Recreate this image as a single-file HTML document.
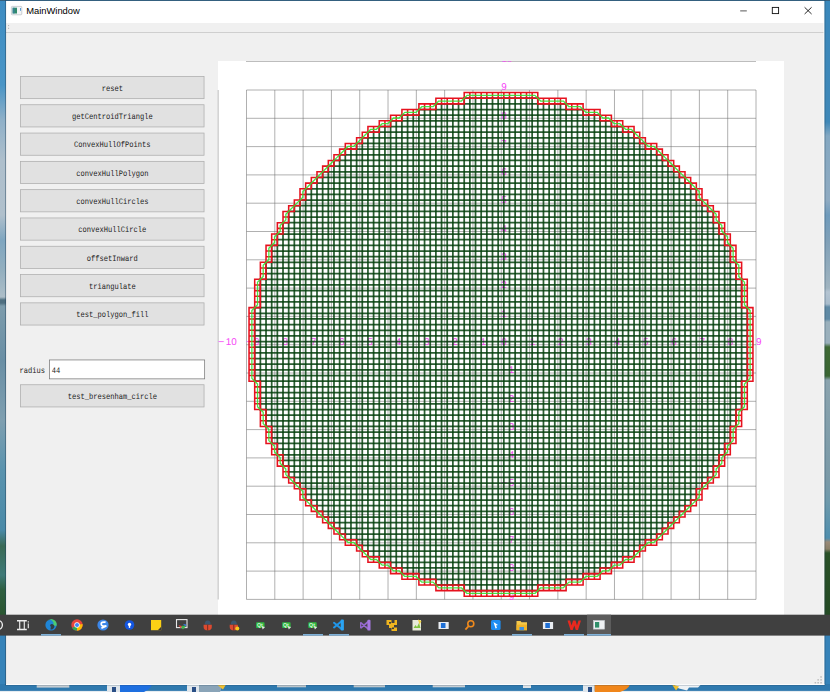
<!DOCTYPE html>
<html lang="en"><head><meta charset="utf-8"><title>MainWindow</title>
<style>
html,body{margin:0;padding:0}
body{width:830px;height:692px;overflow:hidden;position:relative;background:#3b86b9;font-family:"Liberation Sans",sans-serif}
.abs{position:absolute}
#wl{left:0;top:0;width:7px;height:616px;background:linear-gradient(180deg,#3d8cc2 0.00%,#4a95c6 13.80%,#8fb0c8 19.48%,#aebfcc 25.97%,#b0c0cc 34.90%,#7fa6c0 38.96%,#93afbf 43.83%,#adbec8 48.21%,#4f6f80 48.70%,#4f6f80 49.19%,#7d9cac 49.68%,#6a8fa5 58.44%,#7f9fb0 68.18%,#5a93ae 76.30%,#4a8aa8 86.04%,#3a6a55 88.64%,#3f7a78 93.34%,#2f5f40 95.80%,#2a5530 100.00%)}
#wr{left:823px;top:0;width:7px;height:616px;background:linear-gradient(180deg,#3a88bc 0.00%,#3f88b8 19.81%,#84a8c2 22.08%,#8fabc2 32.47%,#6f9bbc 34.90%,#7fa0b8 38.96%,#a0b4c0 46.75%,#b4c4d2 47.40%,#a8bccc 49.35%,#5f8aa5 49.84%,#5f8aa5 51.79%,#9ab0bc 52.27%,#9ab0bc 55.68%,#3f6a35 56.33%,#3a6632 61.04%,#8aa3ae 61.69%,#7a9aa8 77.92%,#6f9aac 81.17%,#4f8fae 87.34%,#9a8a78 87.99%,#8a8068 89.12%,#2a5228 89.77%,#244a24 100.00%)}
#wb{left:0;top:616px;width:830px;height:76px;background:#3683b9}
#wt{left:0;top:0;width:830px;height:1px;background:#34607f}
#win{left:6px;top:1px;width:818px;height:683.5px;background:#f0f0f0}
#title{left:6px;top:1px;width:818px;height:22px;background:#fff}
#ttxt{left:26.3px;top:4.9px;font-size:9.4px;line-height:11px;color:#000;letter-spacing:-0.02px}
#tool{left:6px;top:23px;width:818px;height:9px;background:#f0f0f0;border-bottom:1px solid #cfcfcf}
#white{left:218px;top:61px;width:566px;height:556px;background:#fff}
svg.plot{position:absolute;left:0;top:0}
svg.tb{position:absolute;left:0;top:614px}
svg.chrome{position:absolute;left:0;top:0}
</style></head><body>
<div class="abs" id="wb"></div><div class="abs" id="wl"></div><div class="abs" id="wr"></div><div class="abs" id="wt"></div>
<svg class="abs" style="left:0;top:684px" width="830" height="8" viewBox="0 684 830 8"><rect x="0" y="684" width="830" height="8" fill="#2f79ae"/><rect x="0" y="690.900" width="830" height="1.100" fill="#e6ecf1"/><rect x="36.700" y="685" width="32.600" height="2.600" fill="#c4ccd2"/><rect x="107" y="685" width="13" height="7" fill="#dfe6ec"/><rect x="112" y="687" width="4" height="5" fill="#2a4f86"/><path d="M120 684.500h32q-2 5-8 7.500h-24z" fill="#1e6fe0"/><rect x="187" y="685" width="12" height="7" fill="#dfe6ec"/><rect x="192" y="687" width="4" height="5" fill="#2a4f86"/><path d="M199 684.500h24l-3 7.500h-21z" fill="#8aa4b8"/><path d="M217 684.500h9l-3 5z" fill="#f0c030"/><rect x="277" y="685" width="29" height="2.300" fill="#bcc6cc"/><rect x="353.700" y="685" width="31.300" height="2.300" fill="#bcc6cc"/><rect x="432.700" y="685" width="32.300" height="2.300" fill="#c8d0d6"/><rect x="523" y="685" width="8" height="3" fill="#dfe4e8"/><rect x="583" y="685" width="11.700" height="7" fill="#dfe6ec"/><rect x="588" y="687" width="4" height="5" fill="#2a4f86"/><path d="M594.700 684.500h35.300q-2 5-10 7.500h-25.300z" fill="#f0861a"/><path d="M673 684.500h28l-3 3h-9l-2 3l-8-2z" fill="#eef2f5"/><path d="M672 684.500l4 6l3-4z" fill="#f0c030"/></svg>
<div class="abs" id="win"></div><div class="abs" id="title"></div><div class="abs" id="ttxt">MainWindow</div><div class="abs" id="tool"></div>
<div class="abs" id="white"></div>
<svg class="chrome" width="830" height="692" viewBox="0 0 830 692">
<g fill="#e1e1e1" stroke="#adadad" stroke-width="0.75">
<rect x="20.45" y="76.45" width="183.6" height="22.2"/>
<rect x="20.45" y="104.75" width="183.6" height="22.2"/>
<rect x="20.45" y="133.05" width="183.6" height="22.2"/>
<rect x="20.45" y="161.35" width="183.6" height="22.2"/>
<rect x="20.45" y="189.65" width="183.6" height="22.2"/>
<rect x="20.45" y="217.95" width="183.6" height="22.2"/>
<rect x="20.45" y="246.25" width="183.6" height="22.2"/>
<rect x="20.45" y="274.55" width="183.6" height="22.2"/>
<rect x="20.45" y="302.85" width="183.6" height="22.2"/>
<rect x="20.45" y="384.75" width="183.6" height="22.2"/>
</g>
<rect x="49.55" y="359.95" width="155.1" height="18.9" fill="#fff" stroke="#7a7a7a" stroke-width="0.75"/>
<g font-family="'Liberation Mono', monospace" font-size="8.3" text-rendering="geometricPrecision" fill="#1c1c1c">
<text transform="translate(112.3 90.8) scale(0.8534 1)" text-anchor="middle">reset</text>
<text transform="translate(112.3 119.1) scale(0.8534 1)" text-anchor="middle">getCentroidTriangle</text>
<text transform="translate(112.3 147.4) scale(0.8534 1)" text-anchor="middle">ConvexHullOfPoints</text>
<text transform="translate(112.3 175.7) scale(0.8534 1)" text-anchor="middle">convexHullPolygon</text>
<text transform="translate(112.3 204) scale(0.8534 1)" text-anchor="middle">convexHullCircles</text>
<text transform="translate(112.3 232.3) scale(0.8534 1)" text-anchor="middle">convexHullCircle</text>
<text transform="translate(112.3 260.6) scale(0.8534 1)" text-anchor="middle">offsetInward</text>
<text transform="translate(112.3 288.9) scale(0.8534 1)" text-anchor="middle">triangulate</text>
<text transform="translate(112.3 317.2) scale(0.8534 1)" text-anchor="middle">test_polygon_fill</text>
<text transform="translate(112.3 399.1) scale(0.8534 1)" text-anchor="middle">test_bresenham_circle</text>
<text transform="translate(19.5 373.3) scale(0.8534 1)" text-anchor="start">radius</text>
<text transform="translate(51.7 373) scale(0.8534 1)" text-anchor="start">44</text>
</g>
</svg>
<svg class="chrome" width="830" height="692" viewBox="0 0 830 692">
<path d="M5.600 0V685M824.900 0V685" stroke="#1d3c55" stroke-opacity="0.450" stroke-width="1"/><path d="M5 685H825" stroke="#1d3c55" stroke-opacity="0.400" stroke-width="1"/>
<rect x="11.400" y="6.400" width="10.400" height="8.400" rx="0.800" fill="#f3f5f6" stroke="#b9bfc6" stroke-width="0.700"/>
<rect x="12.600" y="7.700" width="4.400" height="5.800" fill="#2f8a6a"/><rect x="12.600" y="7.700" width="2" height="5.800" fill="#3a7fae" opacity="0.6"/>
<rect x="20" y="8" width="1" height="2.800" fill="#5aa0d8"/>
<path d="M740.200 10.900h6.600" stroke="#444" stroke-width="0.900"/>
<rect x="772.300" y="7.400" width="6.300" height="6.200" fill="none" stroke="#111" stroke-width="0.900"/>
<path d="M804.600 7.300l7 6.700M811.600 7.300l-7 6.700" stroke="#111" stroke-width="0.900"/>
<rect x="8.200" y="25.200" width="0.900" height="0.900" fill="#9a9a9a"/><rect x="8.200" y="27.800" width="0.900" height="0.900" fill="#9a9a9a"/>
<path d="M246 61.500H756" stroke="#bdbdbd" stroke-width="1.100"/>
<path d="M218.200 90V599.500" stroke="#d2d2d2" stroke-width="1.500"/>
<rect x="820.3" y="676.2" width="1.500" height="1.500" fill="#bcbcbc"/>
<rect x="817.4" y="679.1" width="1.500" height="1.500" fill="#bcbcbc"/>
<rect x="820.3" y="679.1" width="1.500" height="1.500" fill="#bcbcbc"/>
<rect x="814.6" y="682" width="1.500" height="1.500" fill="#bcbcbc"/>
<rect x="817.4" y="682" width="1.500" height="1.500" fill="#bcbcbc"/>
<rect x="820.3" y="682" width="1.500" height="1.500" fill="#bcbcbc"/>
<path d="M823.950 1V685" stroke="#fcfcfc" stroke-width="0.900"/><path d="M6 684.450H824.400" stroke="#fcfcfc" stroke-width="1.100"/>
</svg>
<svg class="plot" width="830" height="692" viewBox="0 0 830 692">
<path d="M246.5 90V599.4M246.5 90H756M274.81 90V599.4M246.5 118.3H756M303.11 90V599.4M246.5 146.6H756M331.42 90V599.4M246.5 174.9H756M359.72 90V599.4M246.5 203.2H756M388.03 90V599.4M246.5 231.5H756M416.33 90V599.4M246.5 259.8H756M444.64 90V599.4M246.5 288.1H756M472.94 90V599.4M246.5 316.4H756M501.25 90V599.4M246.5 344.7H756M529.56 90V599.4M246.5 373H756M557.86 90V599.4M246.5 401.3H756M586.17 90V599.4M246.5 429.6H756M614.47 90V599.4M246.5 457.9H756M642.78 90V599.4M246.5 486.2H756M671.08 90V599.4M246.5 514.5H756M699.39 90V599.4M246.5 542.8H756M727.69 90V599.4M246.5 571.1H756M756 90V599.4M246.5 599.4H756" stroke="#6e6e6e" stroke-width="0.55" fill="none"/>
<g font-family="'Liberation Sans', sans-serif" font-size="9.9" text-rendering="geometricPrecision" fill="#f646f6">
<text transform="translate(217.89 345.1) scale(1.1 1)">−</text><text x="225.79" y="345.1">10</text>
<text transform="translate(246.2 345.1) scale(1.1 1)">−</text><text x="254.1" y="345.1">9</text>
<text transform="translate(274.51 345.1) scale(1.1 1)">−</text><text x="282.41" y="345.1">8</text>
<text transform="translate(302.81 345.1) scale(1.1 1)">−</text><text x="310.71" y="345.1">7</text>
<text transform="translate(331.12 345.1) scale(1.1 1)">−</text><text x="339.02" y="345.1">6</text>
<text transform="translate(359.42 345.1) scale(1.1 1)">−</text><text x="367.32" y="345.1">5</text>
<text transform="translate(387.73 345.1) scale(1.1 1)">−</text><text x="395.63" y="345.1">4</text>
<text transform="translate(416.03 345.1) scale(1.1 1)">−</text><text x="423.93" y="345.1">3</text>
<text transform="translate(444.34 345.1) scale(1.1 1)">−</text><text x="452.24" y="345.1">2</text>
<text transform="translate(472.64 345.1) scale(1.1 1)">−</text><text x="480.54" y="345.1">1</text>
<text x="529.66" y="345.1">1</text>
<text x="557.96" y="345.1">2</text>
<text x="586.27" y="345.1">3</text>
<text x="614.57" y="345.1">4</text>
<text x="642.88" y="345.1">5</text>
<text x="671.18" y="345.1">6</text>
<text x="699.49" y="345.1">7</text>
<text x="727.79" y="345.1">8</text>
<text x="756.1" y="345.1">9</text>
<text transform="translate(500.95 599.6) scale(1.1 1)">−</text><text x="508.85" y="599.6">9</text>
<text transform="translate(500.95 571.3) scale(1.1 1)">−</text><text x="508.85" y="571.3">8</text>
<text transform="translate(500.95 543) scale(1.1 1)">−</text><text x="508.85" y="543">7</text>
<text transform="translate(500.95 514.7) scale(1.1 1)">−</text><text x="508.85" y="514.7">6</text>
<text transform="translate(500.95 486.4) scale(1.1 1)">−</text><text x="508.85" y="486.4">5</text>
<text transform="translate(500.95 458.1) scale(1.1 1)">−</text><text x="508.85" y="458.1">4</text>
<text transform="translate(500.95 429.8) scale(1.1 1)">−</text><text x="508.85" y="429.8">3</text>
<text transform="translate(500.95 401.5) scale(1.1 1)">−</text><text x="508.85" y="401.5">2</text>
<text transform="translate(500.95 373.2) scale(1.1 1)">−</text><text x="508.85" y="373.2">1</text>
<text x="501.35" y="344.9">0</text>
<text x="501.35" y="316.6">1</text>
<text x="501.35" y="288.3">2</text>
<text x="501.35" y="260">3</text>
<text x="501.35" y="231.7">4</text>
<text x="501.35" y="203.4">5</text>
<text x="501.35" y="175.1">6</text>
<text x="501.35" y="146.8">7</text>
<text x="501.35" y="118.5">8</text>
<text x="501.35" y="90.2">9</text>
</g>
<svg x="246" y="61.3" width="510" height="8" overflow="hidden"><text x="255.55" y="0.5" font-family="'Liberation Sans', sans-serif" font-size="9.9" text-rendering="geometricPrecision" fill="#f646f6">10</text></svg>
<path d="M464.2 590.62H537.8M435.89 584.96H566.11M418.9 579.3H583.1M401.92 573.64H600.09M390.59 567.98H611.41M379.27 562.32H622.73M367.94 556.66H634.06M362.28 551H639.72M356.62 545.34H645.38M345.3 539.68H656.7M339.63 534.02H662.37M333.97 528.36H668.03M328.31 522.7H673.69M322.65 517.04H679.35M316.99 511.38H685.01M311.32 505.72H690.68M305.66 500.06H696.34M305.66 494.4H696.34M300 488.74H702M294.34 483.08H707.66M288.68 477.42H713.33M288.68 471.76H713.33M283.01 466.1H718.99M283.01 460.44H718.99M277.35 454.78H724.65M277.35 449.12H724.65M271.69 443.46H730.31M271.69 437.8H730.31M271.69 432.14H730.31M266.03 426.48H735.97M266.03 420.82H735.97M266.03 415.16H735.97M260.37 409.5H741.63M260.37 403.84H741.63M260.37 398.18H741.63M260.37 392.52H741.63M260.37 386.86H741.63M254.7 381.2H747.3M254.7 375.54H747.3M254.7 369.88H747.3M254.7 364.22H747.3M254.7 358.56H747.3M254.7 352.9H747.3M254.7 347.24H747.3M254.7 341.58H747.3M254.7 335.92H747.3M254.7 330.26H747.3M254.7 324.6H747.3M254.7 318.94H747.3M254.7 313.28H747.3M254.7 307.62H747.3M260.37 301.96H741.63M260.37 296.3H741.63M260.37 290.64H741.63M260.37 284.98H741.63M260.37 279.32H741.63M266.03 273.66H735.97M266.03 268H735.97M266.03 262.34H735.97M271.69 256.68H730.31M271.69 251.02H730.31M271.69 245.36H730.31M277.35 239.7H724.65M277.35 234.04H724.65M283.01 228.38H718.99M283.01 222.72H718.99M288.68 217.06H713.33M288.68 211.4H713.33M294.34 205.74H707.66M300 200.08H702M305.66 194.42H696.34M305.66 188.76H696.34M311.32 183.1H690.68M316.99 177.44H685.01M322.65 171.78H679.35M328.31 166.12H673.69M333.97 160.46H668.03M339.63 154.8H662.37M345.3 149.14H656.7M356.62 143.48H645.38M362.28 137.82H639.72M367.94 132.16H634.06M379.27 126.5H622.73M390.59 120.84H611.41M401.92 115.18H600.09M418.9 109.52H583.1M435.89 103.86H566.11M464.2 98.2H537.8" stroke="#033f0c" stroke-width="1.75" stroke-linecap="square" fill="none" opacity="0.84"/>
<path d="M254.7 307.62V381.2M260.37 279.32V409.5M266.03 262.34V426.48M271.69 245.36V443.46M277.35 234.04V454.78M283.01 222.72V466.1M288.68 211.4V477.42M294.34 205.74V483.08M300 200.08V488.74M305.66 188.76V500.06M311.32 183.1V505.72M316.99 177.44V511.38M322.65 171.78V517.04M328.31 166.12V522.7M333.97 160.46V528.36M339.63 154.8V534.02M345.3 149.14V539.68M350.96 149.14V539.68M356.62 143.48V545.34M362.28 137.82V551M367.94 132.16V556.66M373.61 132.16V556.66M379.27 126.5V562.32M384.93 126.5V562.32M390.59 120.84V567.98M396.25 120.84V567.98M401.92 115.18V573.64M407.58 115.18V573.64M413.24 115.18V573.64M418.9 109.52V579.3M424.56 109.52V579.3M430.23 109.52V579.3M435.89 103.86V584.96M441.55 103.86V584.96M447.21 103.86V584.96M452.87 103.86V584.96M458.54 103.86V584.96M464.2 98.2V590.62M469.86 98.2V590.62M475.52 98.2V590.62M481.18 98.2V590.62M486.85 98.2V590.62M492.51 98.2V590.62M498.17 98.2V590.62M503.83 98.2V590.62M509.49 98.2V590.62M515.15 98.2V590.62M520.82 98.2V590.62M526.48 98.2V590.62M532.14 98.2V590.62M537.8 98.2V590.62M543.47 103.86V584.96M549.13 103.86V584.96M554.79 103.86V584.96M560.45 103.86V584.96M566.11 103.86V584.96M571.77 109.52V579.3M577.44 109.52V579.3M583.1 109.52V579.3M588.76 115.18V573.64M594.42 115.18V573.64M600.09 115.18V573.64M605.75 120.84V567.98M611.41 120.84V567.98M617.07 126.5V562.32M622.73 126.5V562.32M628.39 132.16V556.66M634.06 132.16V556.66M639.72 137.82V551M645.38 143.48V545.34M651.04 149.14V539.68M656.7 149.14V539.68M662.37 154.8V534.02M668.03 160.46V528.36M673.69 166.12V522.7M679.35 171.78V517.04M685.01 177.44V511.38M690.68 183.1V505.72M696.34 188.76V500.06M702 200.08V488.74M707.66 205.74V483.08M713.33 211.4V477.42M718.99 222.72V466.1M724.65 234.04V454.78M730.31 245.36V443.46M735.97 262.34V426.48M741.63 279.32V409.5M747.3 307.62V381.2" stroke="#033f0c" stroke-width="1.75" stroke-linecap="square" fill="none" opacity="0.84"/>
<path d="M249.04 347.24h5.66v5.66h-5.66zM249.04 352.9h5.66v5.66h-5.66zM249.04 358.56h5.66v5.66h-5.66zM249.04 364.22h5.66v5.66h-5.66zM249.04 369.88h5.66v5.66h-5.66zM249.04 375.54h5.66v5.66h-5.66zM254.7 381.2h5.66v5.66h-5.66zM254.7 386.86h5.66v5.66h-5.66zM254.7 392.52h5.66v5.66h-5.66zM254.7 398.18h5.66v5.66h-5.66zM254.7 403.84h5.66v5.66h-5.66zM260.37 409.5h5.66v5.66h-5.66zM260.37 415.16h5.66v5.66h-5.66zM260.37 420.82h5.66v5.66h-5.66zM266.03 426.48h5.66v5.66h-5.66zM266.03 432.14h5.66v5.66h-5.66zM266.03 437.8h5.66v5.66h-5.66zM271.69 443.46h5.66v5.66h-5.66zM271.69 449.12h5.66v5.66h-5.66zM277.35 454.78h5.66v5.66h-5.66zM277.35 460.44h5.66v5.66h-5.66zM283.01 466.1h5.66v5.66h-5.66zM283.01 471.76h5.66v5.66h-5.66zM288.68 477.42h5.66v5.66h-5.66zM294.34 483.08h5.66v5.66h-5.66zM300 488.74h5.66v5.66h-5.66zM300 494.4h5.66v5.66h-5.66zM305.66 500.06h5.66v5.66h-5.66zM311.32 505.72h5.66v5.66h-5.66zM316.99 511.38h5.66v5.66h-5.66zM322.65 517.04h5.66v5.66h-5.66zM328.31 522.7h5.66v5.66h-5.66zM333.97 528.36h5.66v5.66h-5.66zM339.63 534.02h5.66v5.66h-5.66zM345.3 539.68h5.66v5.66h-5.66zM350.96 539.68h5.66v5.66h-5.66zM356.62 545.34h5.66v5.66h-5.66zM362.28 551h5.66v5.66h-5.66zM367.94 556.66h5.66v5.66h-5.66zM373.61 556.66h5.66v5.66h-5.66zM379.27 562.32h5.66v5.66h-5.66zM384.93 562.32h5.66v5.66h-5.66zM390.59 567.98h5.66v5.66h-5.66zM396.25 567.98h5.66v5.66h-5.66zM401.92 573.64h5.66v5.66h-5.66zM407.58 573.64h5.66v5.66h-5.66zM413.24 573.64h5.66v5.66h-5.66zM418.9 579.3h5.66v5.66h-5.66zM424.56 579.3h5.66v5.66h-5.66zM430.23 579.3h5.66v5.66h-5.66zM435.89 584.96h5.66v5.66h-5.66zM441.55 584.96h5.66v5.66h-5.66zM447.21 584.96h5.66v5.66h-5.66zM452.87 584.96h5.66v5.66h-5.66zM458.54 584.96h5.66v5.66h-5.66zM464.2 590.62h5.66v5.66h-5.66zM469.86 590.62h5.66v5.66h-5.66zM475.52 590.62h5.66v5.66h-5.66zM481.18 590.62h5.66v5.66h-5.66zM486.85 590.62h5.66v5.66h-5.66zM492.51 590.62h5.66v5.66h-5.66zM498.17 590.62h5.66v5.66h-5.66zM503.83 590.62h5.66v5.66h-5.66zM509.49 590.62h5.66v5.66h-5.66zM515.15 590.62h5.66v5.66h-5.66zM520.82 590.62h5.66v5.66h-5.66zM526.48 590.62h5.66v5.66h-5.66zM532.14 590.62h5.66v5.66h-5.66zM537.8 584.96h5.66v5.66h-5.66zM543.47 584.96h5.66v5.66h-5.66zM549.13 584.96h5.66v5.66h-5.66zM554.79 584.96h5.66v5.66h-5.66zM560.45 584.96h5.66v5.66h-5.66zM566.11 579.3h5.66v5.66h-5.66zM571.77 579.3h5.66v5.66h-5.66zM577.44 579.3h5.66v5.66h-5.66zM583.1 573.64h5.66v5.66h-5.66zM588.76 573.64h5.66v5.66h-5.66zM594.42 573.64h5.66v5.66h-5.66zM600.09 567.98h5.66v5.66h-5.66zM605.75 567.98h5.66v5.66h-5.66zM611.41 562.32h5.66v5.66h-5.66zM617.07 562.32h5.66v5.66h-5.66zM622.73 556.66h5.66v5.66h-5.66zM628.39 556.66h5.66v5.66h-5.66zM634.06 551h5.66v5.66h-5.66zM639.72 545.34h5.66v5.66h-5.66zM645.38 539.68h5.66v5.66h-5.66zM651.04 539.68h5.66v5.66h-5.66zM656.7 534.02h5.66v5.66h-5.66zM662.37 528.36h5.66v5.66h-5.66zM668.03 522.7h5.66v5.66h-5.66zM673.69 517.04h5.66v5.66h-5.66zM679.35 511.38h5.66v5.66h-5.66zM685.01 505.72h5.66v5.66h-5.66zM690.68 500.06h5.66v5.66h-5.66zM696.34 494.4h5.66v5.66h-5.66zM696.34 488.74h5.66v5.66h-5.66zM702 483.08h5.66v5.66h-5.66zM707.66 477.42h5.66v5.66h-5.66zM713.33 471.76h5.66v5.66h-5.66zM713.33 466.1h5.66v5.66h-5.66zM718.99 460.44h5.66v5.66h-5.66zM718.99 454.78h5.66v5.66h-5.66zM724.65 449.12h5.66v5.66h-5.66zM724.65 443.46h5.66v5.66h-5.66zM730.31 437.8h5.66v5.66h-5.66zM730.31 432.14h5.66v5.66h-5.66zM730.31 426.48h5.66v5.66h-5.66zM735.97 420.82h5.66v5.66h-5.66zM735.97 415.16h5.66v5.66h-5.66zM735.97 409.5h5.66v5.66h-5.66zM741.63 403.84h5.66v5.66h-5.66zM741.63 398.18h5.66v5.66h-5.66zM741.63 392.52h5.66v5.66h-5.66zM741.63 386.86h5.66v5.66h-5.66zM741.63 381.2h5.66v5.66h-5.66zM747.3 375.54h5.66v5.66h-5.66zM747.3 369.88h5.66v5.66h-5.66zM747.3 364.22h5.66v5.66h-5.66zM747.3 358.56h5.66v5.66h-5.66zM747.3 352.9h5.66v5.66h-5.66zM747.3 347.24h5.66v5.66h-5.66zM747.3 341.58h5.66v5.66h-5.66zM747.3 335.92h5.66v5.66h-5.66zM747.3 330.26h5.66v5.66h-5.66zM747.3 324.6h5.66v5.66h-5.66zM747.3 318.94h5.66v5.66h-5.66zM747.3 313.28h5.66v5.66h-5.66zM747.3 307.62h5.66v5.66h-5.66zM741.63 301.96h5.66v5.66h-5.66zM741.63 296.3h5.66v5.66h-5.66zM741.63 290.64h5.66v5.66h-5.66zM741.63 284.98h5.66v5.66h-5.66zM741.63 279.32h5.66v5.66h-5.66zM735.97 273.66h5.66v5.66h-5.66zM735.97 268h5.66v5.66h-5.66zM735.97 262.34h5.66v5.66h-5.66zM730.31 256.68h5.66v5.66h-5.66zM730.31 251.02h5.66v5.66h-5.66zM730.31 245.36h5.66v5.66h-5.66zM724.65 239.7h5.66v5.66h-5.66zM724.65 234.04h5.66v5.66h-5.66zM718.99 228.38h5.66v5.66h-5.66zM718.99 222.72h5.66v5.66h-5.66zM713.33 217.06h5.66v5.66h-5.66zM713.33 211.4h5.66v5.66h-5.66zM707.66 205.74h5.66v5.66h-5.66zM702 200.08h5.66v5.66h-5.66zM696.34 194.42h5.66v5.66h-5.66zM696.34 188.76h5.66v5.66h-5.66zM690.68 183.1h5.66v5.66h-5.66zM685.01 177.44h5.66v5.66h-5.66zM679.35 171.78h5.66v5.66h-5.66zM673.69 166.12h5.66v5.66h-5.66zM668.03 160.46h5.66v5.66h-5.66zM662.37 154.8h5.66v5.66h-5.66zM656.7 149.14h5.66v5.66h-5.66zM651.04 143.48h5.66v5.66h-5.66zM645.38 143.48h5.66v5.66h-5.66zM639.72 137.82h5.66v5.66h-5.66zM634.06 132.16h5.66v5.66h-5.66zM628.39 126.5h5.66v5.66h-5.66zM622.73 126.5h5.66v5.66h-5.66zM617.07 120.84h5.66v5.66h-5.66zM611.41 120.84h5.66v5.66h-5.66zM605.75 115.18h5.66v5.66h-5.66zM600.09 115.18h5.66v5.66h-5.66zM594.42 109.52h5.66v5.66h-5.66zM588.76 109.52h5.66v5.66h-5.66zM583.1 109.52h5.66v5.66h-5.66zM577.44 103.86h5.66v5.66h-5.66zM571.77 103.86h5.66v5.66h-5.66zM566.11 103.86h5.66v5.66h-5.66zM560.45 98.2h5.66v5.66h-5.66zM554.79 98.2h5.66v5.66h-5.66zM549.13 98.2h5.66v5.66h-5.66zM543.47 98.2h5.66v5.66h-5.66zM537.8 98.2h5.66v5.66h-5.66zM532.14 92.54h5.66v5.66h-5.66zM526.48 92.54h5.66v5.66h-5.66zM520.82 92.54h5.66v5.66h-5.66zM515.15 92.54h5.66v5.66h-5.66zM509.49 92.54h5.66v5.66h-5.66zM503.83 92.54h5.66v5.66h-5.66zM498.17 92.54h5.66v5.66h-5.66zM492.51 92.54h5.66v5.66h-5.66zM486.85 92.54h5.66v5.66h-5.66zM481.18 92.54h5.66v5.66h-5.66zM475.52 92.54h5.66v5.66h-5.66zM469.86 92.54h5.66v5.66h-5.66zM464.2 92.54h5.66v5.66h-5.66zM458.54 98.2h5.66v5.66h-5.66zM452.87 98.2h5.66v5.66h-5.66zM447.21 98.2h5.66v5.66h-5.66zM441.55 98.2h5.66v5.66h-5.66zM435.89 98.2h5.66v5.66h-5.66zM430.23 103.86h5.66v5.66h-5.66zM424.56 103.86h5.66v5.66h-5.66zM418.9 103.86h5.66v5.66h-5.66zM413.24 109.52h5.66v5.66h-5.66zM407.58 109.52h5.66v5.66h-5.66zM401.92 109.52h5.66v5.66h-5.66zM396.25 115.18h5.66v5.66h-5.66zM390.59 115.18h5.66v5.66h-5.66zM384.93 120.84h5.66v5.66h-5.66zM379.27 120.84h5.66v5.66h-5.66zM373.61 126.5h5.66v5.66h-5.66zM367.94 126.5h5.66v5.66h-5.66zM362.28 132.16h5.66v5.66h-5.66zM356.62 137.82h5.66v5.66h-5.66zM350.96 143.48h5.66v5.66h-5.66zM345.3 143.48h5.66v5.66h-5.66zM339.63 149.14h5.66v5.66h-5.66zM333.97 154.8h5.66v5.66h-5.66zM328.31 160.46h5.66v5.66h-5.66zM322.65 166.12h5.66v5.66h-5.66zM316.99 171.78h5.66v5.66h-5.66zM311.32 177.44h5.66v5.66h-5.66zM305.66 183.1h5.66v5.66h-5.66zM300 188.76h5.66v5.66h-5.66zM300 194.42h5.66v5.66h-5.66zM294.34 200.08h5.66v5.66h-5.66zM288.68 205.74h5.66v5.66h-5.66zM283.01 211.4h5.66v5.66h-5.66zM283.01 217.06h5.66v5.66h-5.66zM277.35 222.72h5.66v5.66h-5.66zM277.35 228.38h5.66v5.66h-5.66zM271.69 234.04h5.66v5.66h-5.66zM271.69 239.7h5.66v5.66h-5.66zM266.03 245.36h5.66v5.66h-5.66zM266.03 251.02h5.66v5.66h-5.66zM266.03 256.68h5.66v5.66h-5.66zM260.37 262.34h5.66v5.66h-5.66zM260.37 268h5.66v5.66h-5.66zM260.37 273.66h5.66v5.66h-5.66zM254.7 279.32h5.66v5.66h-5.66zM254.7 284.98h5.66v5.66h-5.66zM254.7 290.64h5.66v5.66h-5.66zM254.7 296.3h5.66v5.66h-5.66zM254.7 301.96h5.66v5.66h-5.66zM249.04 307.62h5.66v5.66h-5.66zM249.04 313.28h5.66v5.66h-5.66zM249.04 318.94h5.66v5.66h-5.66zM249.04 324.6h5.66v5.66h-5.66zM249.04 330.26h5.66v5.66h-5.66zM249.04 335.92h5.66v5.66h-5.66zM249.04 341.58h5.66v5.66h-5.66z" stroke="#e6121e" stroke-width="1.55" fill="none"/>
<polygon points="251.87,350.07 251.87,355.73 251.87,361.39 251.87,367.05 251.87,372.71 251.87,378.37 257.53,384.03 257.53,389.69 257.53,395.35 257.53,401.01 257.53,406.67 263.2,412.33 263.2,417.99 263.2,423.65 268.86,429.31 268.86,434.97 268.86,440.63 274.52,446.29 274.52,451.95 280.18,457.61 280.18,463.27 285.84,468.93 285.84,474.59 291.51,480.25 297.17,485.91 302.83,491.57 302.83,497.23 308.49,502.89 314.15,508.55 319.82,514.21 325.48,519.87 331.14,525.53 336.8,531.19 342.46,536.85 348.13,542.51 353.79,542.51 359.45,548.17 365.11,553.83 370.77,559.49 376.44,559.49 382.1,565.15 387.76,565.15 393.42,570.81 399.08,570.81 404.75,576.47 410.41,576.47 416.07,576.47 421.73,582.13 427.39,582.13 433.06,582.13 438.72,587.79 444.38,587.79 450.04,587.79 455.7,587.79 461.37,587.79 467.03,593.45 472.69,593.45 478.35,593.45 484.01,593.45 489.68,593.45 495.34,593.45 501,593.45 506.66,593.45 512.32,593.45 517.99,593.45 523.65,593.45 529.31,593.45 534.97,593.45 540.63,587.79 546.3,587.79 551.96,587.79 557.62,587.79 563.28,587.79 568.94,582.13 574.61,582.13 580.27,582.13 585.93,576.47 591.59,576.47 597.25,576.47 602.92,570.81 608.58,570.81 614.24,565.15 619.9,565.15 625.56,559.49 631.23,559.49 636.89,553.83 642.55,548.17 648.21,542.51 653.87,542.51 659.54,536.85 665.2,531.19 670.86,525.53 676.52,519.87 682.18,514.21 687.85,508.55 693.51,502.89 699.17,497.23 699.17,491.57 704.83,485.91 710.49,480.25 716.16,474.59 716.16,468.93 721.82,463.27 721.82,457.61 727.48,451.95 727.48,446.29 733.14,440.63 733.14,434.97 733.14,429.31 738.8,423.65 738.8,417.99 738.8,412.33 744.47,406.67 744.47,401.01 744.47,395.35 744.47,389.69 744.47,384.03 750.13,378.37 750.13,372.71 750.13,367.05 750.13,361.39 750.13,355.73 750.13,350.07 750.13,344.41 750.13,338.75 750.13,333.09 750.13,327.43 750.13,321.77 750.13,316.11 750.13,310.45 744.47,304.79 744.47,299.13 744.47,293.47 744.47,287.81 744.47,282.15 738.8,276.49 738.8,270.83 738.8,265.17 733.14,259.51 733.14,253.85 733.14,248.19 727.48,242.53 727.48,236.87 721.82,231.21 721.82,225.55 716.16,219.89 716.16,214.23 710.49,208.57 704.83,202.91 699.17,197.25 699.17,191.59 693.51,185.93 687.85,180.27 682.18,174.61 676.52,168.95 670.86,163.29 665.2,157.63 659.54,151.97 653.87,146.31 648.21,146.31 642.55,140.65 636.89,134.99 631.23,129.33 625.56,129.33 619.9,123.67 614.24,123.67 608.58,118.01 602.92,118.01 597.25,112.35 591.59,112.35 585.93,112.35 580.27,106.69 574.61,106.69 568.94,106.69 563.28,101.03 557.62,101.03 551.96,101.03 546.3,101.03 540.63,101.03 534.97,95.37 529.31,95.37 523.65,95.37 517.99,95.37 512.32,95.37 506.66,95.37 501,95.37 495.34,95.37 489.68,95.37 484.01,95.37 478.35,95.37 472.69,95.37 467.03,95.37 461.37,101.03 455.7,101.03 450.04,101.03 444.38,101.03 438.72,101.03 433.06,106.69 427.39,106.69 421.73,106.69 416.07,112.35 410.41,112.35 404.75,112.35 399.08,118.01 393.42,118.01 387.76,123.67 382.1,123.67 376.44,129.33 370.77,129.33 365.11,134.99 359.45,140.65 353.79,146.31 348.13,146.31 342.46,151.97 336.8,157.63 331.14,163.29 325.48,168.95 319.82,174.61 314.15,180.27 308.49,185.93 302.83,191.59 302.83,197.25 297.17,202.91 291.51,208.57 285.84,214.23 285.84,219.89 280.18,225.55 280.18,231.21 274.52,236.87 274.52,242.53 268.86,248.19 268.86,253.85 268.86,259.51 263.2,265.17 263.2,270.83 263.2,276.49 257.53,282.15 257.53,287.81 257.53,293.47 257.53,299.13 257.53,304.79 251.87,310.45 251.87,316.11 251.87,321.77 251.87,327.43 251.87,333.09 251.87,338.75 251.87,344.41" stroke="#2ee02e" stroke-width="1.3" stroke-linejoin="round" fill="none" opacity="0.88"/>
</svg>
<svg class="tb" width="830" height="22" viewBox="0 614 830 22">
<rect x="0" y="614.700" width="830" height="20.900" fill="#404040"/>
<rect x="587" y="614.700" width="24" height="20.900" fill="#5c5c5c"/>
<rect x="41" y="634.100" width="20" height="1.500" fill="#86bde8"/>
<rect x="303" y="634.100" width="20" height="1.500" fill="#86bde8"/>
<rect x="329" y="634.100" width="20" height="1.500" fill="#86bde8"/>
<rect x="512" y="634.100" width="20" height="1.500" fill="#86bde8"/>
<rect x="564" y="634.100" width="20" height="1.500" fill="#86bde8"/>
<rect x="587" y="634.100" width="24" height="1.500" fill="#86bde8"/>
<circle cx="-2.100" cy="625" r="4.500" fill="none" stroke="#f0f0f0" stroke-width="1.300"/>
<path d="M17 620.800h9.800M17 629.400h9.800" stroke="#ededed" stroke-width="1.500" fill="none"/><path d="M19.700 621v8.400M24.300 621v8.400" stroke="#e4e4e4" stroke-width="1.200" fill="none"/><path d="M28.300 621.200v1.400M28.300 623.600v4.600" stroke="#ededed" stroke-width="1.100" fill="none"/>
<circle cx="51" cy="625" r="5.600" fill="#1f86d8"/><path d="M47 621a5.600 5.600 0 0 1 9.600 4.800h-4.200a2.600 2.600 0 0 0-5.400-4.800z" fill="#4ccb72"/><path d="M50 625.200a2.400 2.400 0 0 1 4.400 1.600a3.200 3.200 0 0 1-4 2.600a3.600 3.600 0 0 0-.4-4.200z" fill="#2f3f4a"/>
<circle cx="77" cy="625" r="5.7" fill="#e8453c"/><path d="M77 625l-4.9 2.9a5.7 5.7 0 0 0 4.9 2.8z" fill="#34a853"/><path d="M77 625v5.7a5.7 5.7 0 0 0 5.6-6.6z" fill="#fbbc05"/><circle cx="77" cy="625" r="2.7" fill="#fff"/><circle cx="77" cy="625" r="2" fill="#4285f4"/>
<circle cx="103" cy="625" r="5.6" fill="#3b86e8"/><path d="M105.6 622.2q-4.6-.6-4.4 1.8t3.600 2.000t-3.4 2.1" stroke="#fff" stroke-width="1.7" fill="none"/>
<circle cx="129.500" cy="625" r="4.8" fill="#1456e0"/><circle cx="129.500" cy="624.4" r="1.7" fill="#fff"/><path d="M128.8 625.500h1.400v2.400h-1.400z" fill="#fff"/>
<rect x="151" y="620" width="10.200" height="10.200" fill="#fbd015"/><path d="M161.200 626.800v3.400h-3.400z" fill="#3a3a3a"/>
<rect x="176.500" y="619.6" width="10.500" height="8" fill="none" stroke="#e8e8e8" stroke-width="1.1"/><path d="M180 626l3 3.600l3.500-4z" fill="#3fb34f"/><path d="M178.500 625l3.500 1.200l-1.500 2z" fill="#e0413a"/><path d="M183 624l3.500 .5l-1 2z" fill="#3b7be0"/>
<path d="M204.7 624.600a3 4 0 0 1 6 0z" fill="#3a566e"/><path d="M203.6 624.700h8.200v2.200a4.100 3.400 0 0 1-8.200 0z" fill="#dc4a30"/><rect x="207.25" y="624.700" width="0.900" height="5.500" fill="#6a2a20"/>
<path d="M230.8 624.600a3 4 0 0 1 6 0z" fill="#3a566e"/><path d="M229.7 624.700h8.200v2.200a4.100 3.400 0 0 1-8.200 0z" fill="#dc4a30"/><rect x="233.35" y="624.700" width="0.900" height="5.500" fill="#6a2a20"/>
<circle cx="237.300" cy="628.400" r="2" fill="#f8c81c"/>
<rect x="256.1" y="622.200" width="8.400" height="5.800" rx="0.800" fill="#2fb840"/><text x="256.9" y="627" font-family="'Liberation Sans', sans-serif" font-size="5.200" font-weight="bold" fill="#d8f5dc">Qt</text><path d="M261.7 626.300l3.300 .700l-2.300 2.500z" fill="#e4e4e4"/>
<rect x="282.2" y="622.200" width="8.400" height="5.800" rx="0.800" fill="#2fb840"/><text x="283" y="627" font-family="'Liberation Sans', sans-serif" font-size="5.200" font-weight="bold" fill="#d8f5dc">Qt</text><path d="M287.8 626.300l3.300 .700l-2.300 2.500z" fill="#e4e4e4"/>
<rect x="308.3" y="622.200" width="8.400" height="5.800" rx="0.800" fill="#2fb840"/><text x="309.1" y="627" font-family="'Liberation Sans', sans-serif" font-size="5.200" font-weight="bold" fill="#d8f5dc">Qt</text><path d="M313.9 626.300l3.300 .700l-2.300 2.500z" fill="#e4e4e4"/>
<path d="M334 622.800L341.500 629M334 627.400L341.500 621.200" stroke="#2196e8" stroke-width="2" stroke-linecap="round" fill="none"/><rect x="340.700" y="619.600" width="3.200" height="11" rx="1" fill="#2aa4f4"/>
<path d="M361 622.800L367.800 628.600M361 627.800L367.800 622" stroke="#9468cc" stroke-width="1.700" stroke-linecap="round" fill="none"/><rect x="367.400" y="619.800" width="3.100" height="10.800" rx="0.900" fill="#a678e0"/><rect x="360" y="622.600" width="1.300" height="5.400" fill="#9468cc"/>
<path d="M386.500 620h5v3h3v-3h2.500v5h-3v2.500h3v3.500h-5.500v-3h-2.500v-3h-2.500z" fill="#f0b51f"/><rect x="389" y="622" width="2" height="1.600" fill="#3c3c3c"/><rect x="392" y="627.500" width="2" height="1.600" fill="#3c3c3c"/>
<rect x="412.500" y="620" width="8.500" height="10.500" fill="#e8ead8"/><path d="M413.500 628l2-3l1.500 2l2-4l1.500 5z" fill="#7fc23f"/><path d="M418 619.500l3.500 1.500l-2 3.500z" fill="#f2d13a"/>
<rect x="438.5" y="622" width="10.200" height="7" fill="#e9edf2"/><rect x="440.9" y="623" width="4.600" height="5" fill="#1d6fd6"/>
<rect x="542.9" y="622" width="10.200" height="7" fill="#e9edf2"/><rect x="545.3" y="623" width="4.600" height="5" fill="#1d6fd6"/>
<circle cx="470.800" cy="623.800" r="3" fill="none" stroke="#f08a1c" stroke-width="1.600"/><path d="M468.600 626.200l-3.200 3.400" stroke="#f08a1c" stroke-width="1.800"/>
<rect x="491" y="620" width="9.600" height="10" rx="1.500" fill="#1e8df2"/><path d="M493.500 622l4.500 3l-2 .5l1 2.500l-1.500 .5z" fill="#fff"/>
<path d="M516.500 621h4l1 1.200h5.500v8h-10.500z" fill="#f5c84a"/><rect x="516.500" y="624.600" width="10.500" height="5.600" fill="#f0b429"/><rect x="519.500" y="627" width="4.500" height="3.200" fill="#3f8fe0"/>
<path d="M567.500 620.500h2.600l1.400 5l1.600-5h2.400l1.500 5l1.500-5h2.500l-3 9.500h-2.200l-1.500-4.600l-1.600 4.600h-2.200z" fill="#e8281e"/>
<rect x="593.500" y="620.500" width="11" height="8.600" fill="#eef1f3" stroke="#c8ccd0" stroke-width="0.6"/><rect x="595" y="622" width="4.200" height="5.600" fill="#2f8f6a"/>
</svg>
</body></html>
